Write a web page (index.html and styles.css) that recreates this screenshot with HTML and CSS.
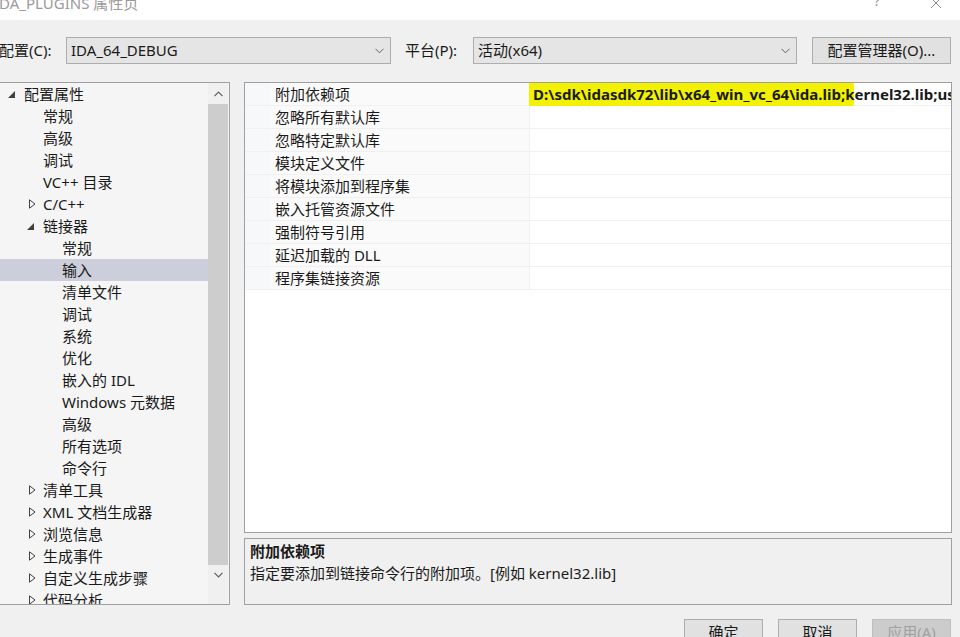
FILE: index.html
```html
<!DOCTYPE html>
<html lang="zh-CN">
<head>
<meta charset="utf-8">
<title>IDA_PLUGINS 属性页</title>
<link rel="stylesheet" href="styles.css">
</head>
<body>
<div class="titlebar">
  <span class="title">IDA_PLUGINS 属性页</span>
  <span class="tb-btns">
    <span class="help">?</span>
    <svg class="close" width="12" height="12" viewBox="0 0 12 12"><path d="M1 1L11 11M11 1L1 11" stroke="#8a8a8a" stroke-width="1"/></svg>
  </span>
</div>

<div class="toolbar">
  <span class="lbl lbl-config">配置(C):</span>
  <div class="combo combo-config"><span>IDA_64_DEBUG</span>
    <svg class="chev" width="9" height="6" viewBox="0 0 9 6"><path d="M0.5 0.8L4.5 4.8L8.5 0.8" fill="none" stroke="#606060" stroke-width="1"/></svg></div>
  <span class="lbl lbl-platform">平台(P):</span>
  <div class="combo combo-platform"><span>活动(x64)</span>
    <svg class="chev" width="9" height="6" viewBox="0 0 9 6"><path d="M0.5 0.8L4.5 4.8L8.5 0.8" fill="none" stroke="#606060" stroke-width="1"/></svg></div>
  <button class="btn btn-mgr">配置管理器(O)...</button>
</div>

<div class="main">
  <div class="tree">
    <div class="tree-list">
      <div class="node l0"><span class="arr"><svg width="7" height="7" viewBox="0 0 7 7"><path d="M7 0L7 7L0 7Z" fill="#404040"/></svg></span>配置属性</div>
      <div class="node l1"><span class="arr"></span>常规</div>
      <div class="node l1"><span class="arr"></span>高级</div>
      <div class="node l1"><span class="arr"></span>调试</div>
      <div class="node l1"><span class="arr"></span>VC++ 目录</div>
      <div class="node l1"><span class="arr"><svg width="7" height="10" viewBox="0 0 7 10"><path d="M0.5 0.8L6 5L0.5 9.2Z" fill="none" stroke="#404040" stroke-width="1"/></svg></span>C/C++</div>
      <div class="node l1"><span class="arr"><svg width="7" height="7" viewBox="0 0 7 7"><path d="M7 0L7 7L0 7Z" fill="#404040"/></svg></span>链接器</div>
      <div class="node l2"><span class="arr"></span>常规</div>
      <div class="node l2 sel"><span class="arr"></span>输入</div>
      <div class="node l2"><span class="arr"></span>清单文件</div>
      <div class="node l2"><span class="arr"></span>调试</div>
      <div class="node l2"><span class="arr"></span>系统</div>
      <div class="node l2"><span class="arr"></span>优化</div>
      <div class="node l2"><span class="arr"></span>嵌入的 IDL</div>
      <div class="node l2"><span class="arr"></span>Windows 元数据</div>
      <div class="node l2"><span class="arr"></span>高级</div>
      <div class="node l2"><span class="arr"></span>所有选项</div>
      <div class="node l2"><span class="arr"></span>命令行</div>
      <div class="node l1"><span class="arr"><svg width="7" height="10" viewBox="0 0 7 10"><path d="M0.5 0.8L6 5L0.5 9.2Z" fill="none" stroke="#404040" stroke-width="1"/></svg></span>清单工具</div>
      <div class="node l1"><span class="arr"><svg width="7" height="10" viewBox="0 0 7 10"><path d="M0.5 0.8L6 5L0.5 9.2Z" fill="none" stroke="#404040" stroke-width="1"/></svg></span>XML 文档生成器</div>
      <div class="node l1"><span class="arr"><svg width="7" height="10" viewBox="0 0 7 10"><path d="M0.5 0.8L6 5L0.5 9.2Z" fill="none" stroke="#404040" stroke-width="1"/></svg></span>浏览信息</div>
      <div class="node l1"><span class="arr"><svg width="7" height="10" viewBox="0 0 7 10"><path d="M0.5 0.8L6 5L0.5 9.2Z" fill="none" stroke="#404040" stroke-width="1"/></svg></span>生成事件</div>
      <div class="node l1"><span class="arr"><svg width="7" height="10" viewBox="0 0 7 10"><path d="M0.5 0.8L6 5L0.5 9.2Z" fill="none" stroke="#404040" stroke-width="1"/></svg></span>自定义生成步骤</div>
      <div class="node l1"><span class="arr"><svg width="7" height="10" viewBox="0 0 7 10"><path d="M0.5 0.8L6 5L0.5 9.2Z" fill="none" stroke="#404040" stroke-width="1"/></svg></span>代码分析</div>
    </div>
    <div class="vscroll">
      <div class="sb-btn"><svg width="9" height="6" viewBox="0 0 9 6"><path d="M0.5 5.2L4.5 1.2L8.5 5.2" fill="none" stroke="#606060" stroke-width="1.2"/></svg></div>
      <div class="sb-track"><div class="sb-thumb"></div></div>
      <div class="sb-btn"><svg width="9" height="6" viewBox="0 0 9 6"><path d="M0.5 0.8L4.5 4.8L8.5 0.8" fill="none" stroke="#606060" stroke-width="1.2"/></svg></div>
    </div>
  </div>

  <div class="right">
    <div class="grid">
      <div class="row"><span class="gut"></span><span class="name">附加依赖项</span><span class="val"><span class="hl">D:\sdk\idasdk72\lib\x64_win_vc_64\ida.lib;</span>kernel32.lib;user32.lib;gdi32.lib</span></div>
      <div class="row"><span class="gut"></span><span class="name">忽略所有默认库</span><span class="val"></span></div>
      <div class="row"><span class="gut"></span><span class="name">忽略特定默认库</span><span class="val"></span></div>
      <div class="row"><span class="gut"></span><span class="name">模块定义文件</span><span class="val"></span></div>
      <div class="row"><span class="gut"></span><span class="name">将模块添加到程序集</span><span class="val"></span></div>
      <div class="row"><span class="gut"></span><span class="name">嵌入托管资源文件</span><span class="val"></span></div>
      <div class="row"><span class="gut"></span><span class="name">强制符号引用</span><span class="val"></span></div>
      <div class="row"><span class="gut"></span><span class="name">延迟加载的 DLL</span><span class="val"></span></div>
      <div class="row"><span class="gut"></span><span class="name">程序集链接资源</span><span class="val"></span></div>
    </div>
    <div class="desc">
      <div class="desc-title">附加依赖项</div>
      <div class="desc-text">指定要添加到链接命令行的附加项。[例如 kernel32.lib]</div>
    </div>
  </div>
</div>

<div class="footer">
  <button class="btn btn-foot">确定</button>
  <button class="btn btn-foot">取消</button>
  <button class="btn btn-foot disabled">应用(A)</button>
</div>
</body>
</html>
```

FILE: styles.css
```css
* { box-sizing: border-box; }
html, body {
  margin: 0;
  padding: 0;
  width: 960px;
  height: 637px;
  overflow: hidden;
  background: #f0f0f0;
  font-family: "Noto Sans", "Noto Sans CJK SC", sans-serif;
  font-size: 15px;
  color: #1a1a1a;
}

.titlebar {
  height: 20px;
  background: #ffffff;
  display: flex;
  justify-content: space-between;
  overflow: hidden;
}
.title {
  margin-top: -8px;
  margin-left: -6px;
  line-height: 22px;
  color: #9a9a9a;
  font-size: 15px;
}
.tb-btns {
  display: flex;
  align-items: flex-start;
  margin-top: -9px;
}
.help {
  color: #9a9a9a;
  line-height: 20px;
  font-size: 14px;
  margin-right: 50px;
}
.close {
  margin-top: 6px;
  margin-right: 18px;
}

.toolbar {
  margin-top: 17px;
  height: 27px;
  display: flex;
  align-items: center;
}
.lbl { line-height: 27px; white-space: nowrap; }
.lbl-config { width: 67px; margin-left: -1px; }
.lbl-platform { width: 68px; margin-left: 14px; }
.combo {
  height: 27px;
  border: 1px solid #adadad;
  background: #e5e5e5;
  display: flex;
  align-items: center;
  justify-content: space-between;
  padding: 0 6px 0 4px;
  line-height: 25px;
}
.combo-config { width: 325px; }
.combo-platform { width: 324px; }
.chev { margin-top: 1px; }
.btn {
  font-family: "Noto Sans", "Noto Sans CJK SC", sans-serif;
  font-size: 15px;
  color: #1a1a1a;
  background: #e1e1e1;
  border: 1px solid #adadad;
  padding: 0;
  height: 27px;
  line-height: 25px;
}
.btn-mgr { width: 139px; margin-left: 15px; }

.main {
  margin-top: 18px;
  display: flex;
  height: 523px;
}
.tree {
  width: 232px;
  margin-left: -2px;
  height: 523px;
  border: 1px solid #a0a0a0;
  background: #f5f5f5;
  display: flex;
  overflow: hidden;
}
.tree-list {
  width: 209px;
  overflow: hidden;
}
.node {
  height: 22px;
  line-height: 22px;
  display: flex;
  align-items: center;
  white-space: nowrap;
}
.node.sel { background: #cccedb; }
.arr {
  width: 19px;
  flex: none;
  display: flex;
  align-items: center;
  padding-left: 3px;
}
.l0 { padding-left: 6px; }
.l1 { padding-left: 25px; }
.l2 { padding-left: 44px; }
.l1 .arr svg[height="10"] { margin-left: 2px; }

.vscroll {
  width: 20px;
  display: flex;
  flex-direction: column;
  background: #f0f0f0;
}
.sb-btn {
  height: 21px;
  display: flex;
  align-items: center;
  justify-content: center;
}
.sb-track { flex: 1; display: flex; flex-direction: column; }
.sb-thumb { height: 461px; background: #cdcdcd; }
.sb-track + .sb-btn { height: 39px; align-items: flex-start; padding-top: 7px; }

.right {
  margin-left: 14px;
  width: 708px;
  display: flex;
  flex-direction: column;
  gap: 5px;
}
.grid {
  height: 451px;
  border: 1px solid #a0a0a0;
  background: #ffffff;
  overflow: hidden;
}
.row {
  height: 23px;
  display: flex;
  background: #fafafa;
  border-bottom: 1px solid #f0f0f0;
  white-space: nowrap;
}
.gut { width: 25px; flex: none; background: #f7f8fa; }
.name {
  width: 259px;
  flex: none;
  padding-left: 5px;
  line-height: 22px;
}
.val {
  flex: 1;
  border-left: 1px solid #f0f0f0;
  padding-left: 3px;
  line-height: 22px;
  font-weight: bold;
  overflow: visible;
  background: #ffffff;
}
.hl {
  background: #f2f200;
  padding: 8px 9px 7px 4px;
  margin-left: -4px;
  margin-right: -9px;
  border-radius: 2px 10px 8px 2px;
}

.desc {
  height: 67px;
  border: 1px solid #a0a0a0;
  background: #f0f0f0;
  padding: 1px 5px 0;
}
.desc-title { font-weight: bold; line-height: 22px; }
.desc-text { line-height: 23px; }

.footer {
  margin-top: 14px;
  display: flex;
  justify-content: flex-end;
  gap: 15px;
  padding-right: 9px;
}
.btn-foot { width: 79px; }
.btn-foot.disabled { background: #cccccc; border-color: #bfbfbf; color: #a0a0a0; }
```
